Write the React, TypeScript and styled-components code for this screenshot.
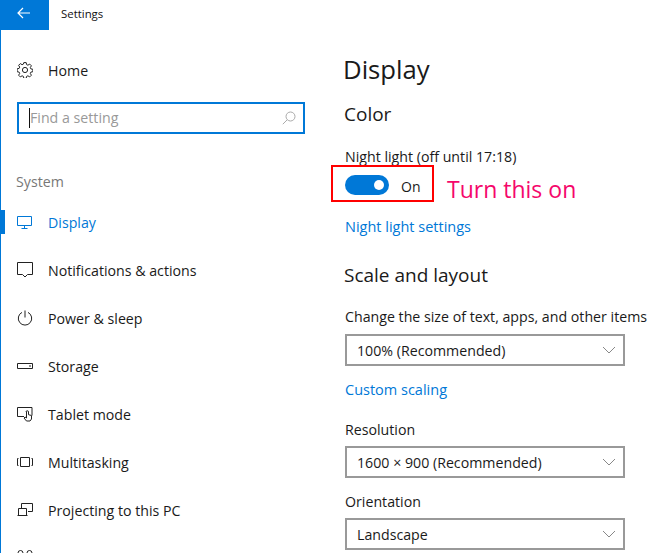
import styled, { createGlobalStyle } from "styled-components";
import { ReactNode } from "react";

const GlobalStyle = createGlobalStyle`
  html, body {
    margin: 0;
    padding: 0;
    background: #fff;
    overflow: hidden;
  }
  body {
    font-family: "Open Sans", "Noto Sans", sans-serif;
    color: #1a1a1a;
  }
`;

const GearIcon = () => (
  <svg width="16" height="16" viewBox="0 0 16 16" fill="none" stroke="#222" strokeWidth="1">
    <circle cx="8" cy="8" r="2.6" />
    <path d="M6.8.6h2.4l.4 2 1.3.6 1.8-1.1 1.7 1.7-1.1 1.8.6 1.3 2 .4v2.4l-2 .4-.6 1.3 1.1 1.8-1.7 1.7-1.8-1.1-1.3.6-.4 2H6.8l-.4-2-1.3-.6-1.8 1.1-1.7-1.7 1.1-1.8-.6-1.3-2-.4V6.8l2-.4.6-1.3-1.1-1.8 1.7-1.7 1.8 1.1 1.3-.6z" />
  </svg>
);

const MonitorIcon = () => (
  <svg width="16" height="16" viewBox="0 0 16 16" fill="none" stroke="#0078d7" strokeWidth="1">
    <path d="M.5 2.500h14v9H.5zM7.500 11.500v3M4.500 14.500h6" />
  </svg>
);

const BubbleIcon = () => (
  <svg width="16" height="16" viewBox="0 0 16 16" fill="none" stroke="#222" strokeWidth="1">
    <path d="M.5.5h15v12h-5L8 15l-2.500-2.500h-5z" />
  </svg>
);

const PowerIcon = () => (
  <svg width="16" height="16" viewBox="0 0 16 16" fill="none" stroke="#222" strokeWidth="1">
    <path d="M5 2.400a6.700 6.700 0 1 0 6 0M8 .5v7" />
  </svg>
);

const StorageIcon = () => (
  <svg width="16" height="16" viewBox="0 0 16 16" fill="none" stroke="#222" strokeWidth="1">
    <path d="M.5 5.500h15v5H.5z" />
    <path d="M12 8h2" />
  </svg>
);

const TabletIcon = () => (
  <svg width="16" height="16" viewBox="0 0 16 16" fill="none" stroke="#222" strokeWidth="1">
    <path d="M7 10.500H.5v-9h14.500v8" />
    <path d="M9.500 6v6l-1.500-1-1 1 2.500 3h3.500l1.500-2v-3.500l-3-.8V6a1.200 1.200 0 0 0-2.500 0z" />
  </svg>
);

const MultitaskIcon = () => (
  <svg width="16" height="16" viewBox="0 0 16 16" fill="none" stroke="#222" strokeWidth="1">
    <path d="M3.500 3.500h9v9h-9zM1.500 4.500H.5v7h1M14.500 4.500h1v7h-1" />
  </svg>
);

const ProjectIcon = () => (
  <svg width="16" height="16" viewBox="0 0 16 16" fill="none" stroke="#222" strokeWidth="1">
    <path d="M4.500 6V1.500h11v8H11M.5 13.500h10M1.500 13V6.500h8V13" />
  </svg>
);

const SharedIcon = () => (
  <svg width="16" height="16" viewBox="0 0 16 16" fill="none" stroke="#222" strokeWidth="1">
    <circle cx="3.500" cy="3" r="2.500" />
    <circle cx="12.500" cy="3" r="2.500" />
    <path d="M.5 13a3 3 0 0 1 6 0M9.500 13a3 3 0 0 1 6 0" />
  </svg>
);

const SearchIcon = () => (
  <svg width="14" height="14" viewBox="0 0 14 14" fill="none" stroke="#aaa" strokeWidth="1">
    <circle cx="8.500" cy="5.500" r="4.500" />
    <path d="M5.200 8.800L.8 13.200" />
  </svg>
);

const Chevron = () => (
  <svg width="14" height="8" viewBox="0 0 14 8" fill="none" stroke="#888" strokeWidth="1">
    <path d="M1 1l6 6 6-6" />
  </svg>
);

const navItems: { id: string; label?: string; icon: ReactNode; active?: boolean }[] = [
  { id: "display", label: "Display", icon: <MonitorIcon />, active: true },
  { id: "notifications", label: "Notifications & actions", icon: <BubbleIcon /> },
  { id: "power", label: "Power & sleep", icon: <PowerIcon /> },
  { id: "storage", label: "Storage", icon: <StorageIcon /> },
  { id: "tablet", label: "Tablet mode", icon: <TabletIcon /> },
  { id: "multitasking", label: "Multitasking", icon: <MultitaskIcon /> },
  { id: "projecting", label: "Projecting to this PC", icon: <ProjectIcon /> },
  // only the top of this icon shows at the bottom edge
  { id: "next", icon: <SharedIcon /> },
];

export default function App(): JSX.Element {
  return (
    <>
      <GlobalStyle />
      <Window>
        <TitleBar>
          <BackButton>
            <svg width="14" height="12" viewBox="0 0 14 12" fill="none" stroke="#fff" strokeWidth="1.2">
              <path d="M6 1L1 6l5 5M1 6h12" />
            </svg>
          </BackButton>
          <TitleText>Settings</TitleText>
        </TitleBar>
        <Body>
          <Sidebar>
            <HomeRow>
              <IconSlot><GearIcon /></IconSlot>
              <NavLabel>Home</NavLabel>
            </HomeRow>
            <SearchBox>
              <Caret />
              <Placeholder>Find a setting</Placeholder>
              <SearchIcon />
            </SearchBox>
            <GroupTitle>System</GroupTitle>
            {navItems.map((item) => (
              <NavRow key={item.id} $active={item.active}>
                <IconSlot>{item.icon}</IconSlot>
                {item.label && <NavLabel $active={item.active}>{item.label}</NavLabel>}
              </NavRow>
            ))}
          </Sidebar>
          <Main>
            <PageTitle>Display</PageTitle>
            <SectionTitle $top={8}>Color</SectionTitle>
            <FieldLabel $top={19} $bottom={0}>Night light (off until 17:18)</FieldLabel>
            <ToggleRow>
              <Toggle><Knob /></Toggle>
              <ToggleText>On</ToggleText>
              <RedBox />
              <Annotation>Turn this on</Annotation>
            </ToggleRow>
            <LinkText $top={22}>Night light settings</LinkText>
            <SectionTitle $top={24}>Scale and layout</SectionTitle>
            <FieldLabel $top={18} $bottom={7}>Change the size of text, apps, and other items</FieldLabel>
            <Select><SelectValue>100% (Recommended)</SelectValue><Chevron /></Select>
            <LinkText $top={14}>Custom scaling</LinkText>
            <FieldLabel $top={20} $bottom={6}>Resolution</FieldLabel>
            <Select><SelectValue>1600 × 900 (Recommended)</SelectValue><Chevron /></Select>
            <FieldLabel $top={14} $bottom={6}>Orientation</FieldLabel>
            <Select><SelectValue>Landscape</SelectValue><Chevron /></Select>
          </Main>
        </Body>
      </Window>
    </>
  );
}

const Window = styled.div`
  width: 663px;
  height: 553px;
  box-sizing: border-box;
  border-left: 1px solid #0078d7;
  overflow: hidden;
  background: #fff;
`;

const TitleBar = styled.header`
  display: flex;
  align-items: center;
  height: 30px;
`;

const BackButton = styled.div`
  width: 48px;
  height: 30px;
  background: #0078d7;
  display: flex;
  align-items: center;
  justify-content: center;
  padding-right: 2px;
  padding-bottom: 4px;
  box-sizing: border-box;
`;

const TitleText = styled.div`
  margin-left: 12px;
  font-size: 11.400px;
  margin-top: -3px;
  color: #111;
`;

const Body = styled.div`
  display: grid;
  grid-template-columns: 344px 1fr;
`;

const Sidebar = styled.nav`
  display: flex;
  flex-direction: column;
`;

const HomeRow = styled.div`
  display: flex;
  align-items: center;
  height: 24px;
  margin-top: 28px;
  padding-left: 16px;
`;

const IconSlot = styled.span`
  width: 31px;
  height: 16px;
  display: block;
  flex: none;
  svg { display: block; }
`;

const NavLabel = styled.span<{ $active?: boolean }>`
  font-size: 14.200px;
  color: ${(p) => (p.$active ? "#0078d7" : "#1a1a1a")};
`;

const SearchBox = styled.div`
  display: flex;
  align-items: center;
  box-sizing: border-box;
  width: 288px;
  height: 32px;
  margin: 20px 0 0 16px;
  border: 2px solid #0078d7;
  padding: 0 7px 0 10px;
`;

const Caret = styled.span`
  width: 1px;
  height: 20px;
  background: #111;
  flex: none;
`;

const Placeholder = styled.span`
  flex: 1;
  font-size: 14.200px;
  color: #999;
  padding-bottom: 2px;
`;

const GroupTitle = styled.div`
  font-size: 14.200px;
  line-height: 20px;
  color: #777;
  margin: 38px 0 18px 15px;
`;

const NavRow = styled.div<{ $active?: boolean }>`
  display: flex;
  align-items: center;
  flex: none;
  height: 24px;
  margin-bottom: 24px;
  padding-left: 16px;
  position: relative;
  &::before {
    content: "";
    display: ${(p) => (p.$active ? "block" : "none")};
    position: absolute;
    left: -1px;
    top: 0;
    width: 5px;
    height: 24px;
    background: #0078d7;
  }
`;

const Main = styled.main`
  display: flex;
  flex-direction: column;
  align-items: flex-start;
`;

const PageTitle = styled.h1`
  margin: 18px 0 0 -2px;
  font-size: 25.700px;
  font-weight: 400;
  line-height: 44px;
  color: #1a1a1a;
`;

const SectionTitle = styled.h2<{ $top: number }>`
  margin: ${(p) => p.$top}px 0 0 -1px;
  font-size: 19px;
  font-weight: 400;
  line-height: 28px;
  color: #1a1a1a;
`;

const FieldLabel = styled.div<{ $top: number; $bottom: number }>`
  margin-top: ${(p) => p.$top}px;
  margin-bottom: ${(p) => p.$bottom}px;
  font-size: 14.200px;
  line-height: 20px;
  color: #1a1a1a;
`;

const ToggleRow = styled.div`
  position: relative;
  display: flex;
  align-items: center;
  margin-top: 8px;
  height: 20px;
`;

const Toggle = styled.div`
  width: 44px;
  height: 20px;
  border-radius: 10px;
  background: #0078d7;
  position: relative;
`;

const Knob = styled.span`
  position: absolute;
  right: 5px;
  top: 5px;
  width: 10px;
  height: 10px;
  border-radius: 50%;
  background: #fff;
`;

const ToggleText = styled.span`
  margin-left: 12px;
  padding-top: 2px;
  font-size: 14px;
  color: #1a1a1a;
`;

const RedBox = styled.div`
  position: absolute;
  left: -14px;
  top: -10px;
  width: 103px;
  height: 37px;
  box-sizing: border-box;
  border: 2px solid #f00;
`;

const Annotation = styled.span`
  position: absolute;
  left: 102px;
  top: -2px;
  font-size: 23px;
  line-height: 32px;
  white-space: nowrap;
  color: #f5076b;
`;

const LinkText = styled.div<{ $top: number }>`
  margin-top: ${(p) => p.$top}px;
  font-size: 14.500px;
  line-height: 20px;
  color: #0078d7;
`;

const Select = styled.div`
  box-sizing: border-box;
  width: 280px;
  height: 32px;
  border: 2px solid #999;
  padding: 0 7px 0 10px;
  display: flex;
  align-items: center;
  justify-content: space-between;
  font-size: 14.200px;
  color: #1a1a1a;
`;

const SelectValue = styled.span`
  padding-top: 1px;
`;
